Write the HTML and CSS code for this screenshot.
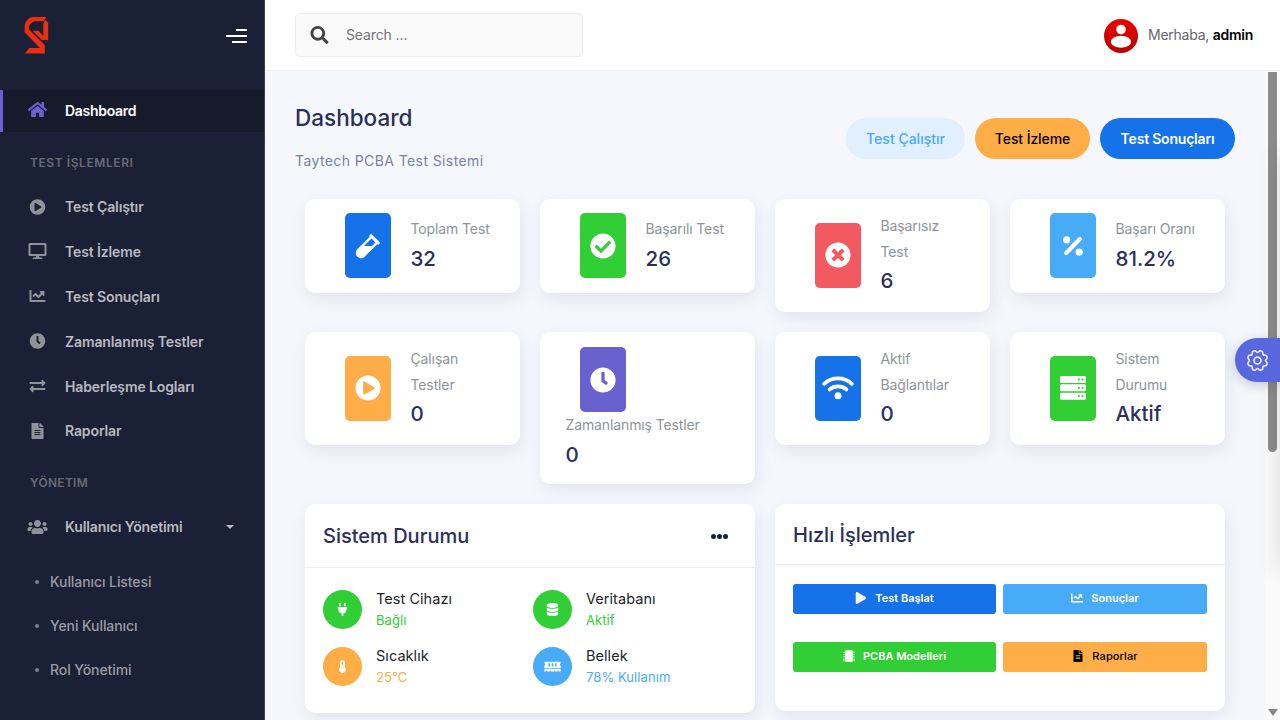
FILE: index.html
```html
<!DOCTYPE html>
<html lang="tr">
<head>
<meta charset="utf-8">
<title>Dashboard</title>
<link rel="stylesheet" href="styles.css">
</head>
<body>
<svg class="sprite" aria-hidden="true">
<symbol id="home" viewBox="0 0 576 512"><path d="M280.37 148.26L96 300.11V464a16 16 0 0 0 16 16l112.06-.29a16 16 0 0 0 15.92-16V368a16 16 0 0 1 16-16h64a16 16 0 0 1 16 16v95.64a16 16 0 0 0 16 16.05L464 480a16 16 0 0 0 16-16V300L295.67 148.26a12.19 12.19 0 0 0-15.3 0zM571.6 251.47L488 182.56V44.05a12 12 0 0 0-12-12h-56a12 12 0 0 0-12 12v72.61L318.47 43a48 48 0 0 0-61 0L4.34 251.47a12 12 0 0 0-1.6 16.9l25.5 31A12 12 0 0 0 45.15 301l235.22-193.74a12.19 12.19 0 0 1 15.3 0L530.9 301a12 12 0 0 0 16.9-1.6l25.5-31a12 12 0 0 0-1.7-16.93z"/></symbol>
<symbol id="play-circle" viewBox="0 0 512 512"><path d="M256 8C119 8 8 119 8 256s111 248 248 248 248-111 248-248S393 8 256 8zm115.7 272l-176 101c-15.8 8.8-35.7-2.5-35.7-21V152c0-18.4 19.8-29.8 35.7-21l176 107c16.4 9.2 16.4 32.9 0 42z"/></symbol>
<symbol id="desktop" viewBox="0 0 576 512"><path d="M528 0H48C21.5 0 0 21.5 0 48v320c0 26.5 21.5 48 48 48h192l-16 48h-72c-13.3 0-24 10.7-24 24s10.7 24 24 24h272c13.3 0 24-10.7 24-24s-10.7-24-24-24h-72l-16-48h192c26.5 0 48-21.5 48-48V48c0-26.5-21.5-48-48-48zm-16 352H64V64h448v288z"/></symbol>
<symbol id="chart" viewBox="0 0 512 512"><path d="M496 384H64V80c0-8.84-7.16-16-16-16H16C7.16 64 0 71.16 0 80v336c0 17.67 14.33 32 32 32h464c8.84 0 16-7.16 16-16v-32c0-8.84-7.16-16-16-16zM464 96H345.94c-21.38 0-32.09 25.85-16.97 40.97l32.4 32.4L288 242.75l-73.37-73.37c-12.5-12.5-32.76-12.5-45.25 0l-68.69 68.69c-6.25 6.25-6.25 16.38 0 22.63l22.62 22.62c6.25 6.25 16.38 6.25 22.63 0L192 237.25l73.37 73.37c12.5 12.5 32.76 12.5 45.25 0l96-96 32.4 32.4c15.12 15.12 40.97 4.41 40.97-16.97V112c.01-8.84-7.15-16-15.99-16z"/></symbol>
<symbol id="clock" viewBox="0 0 512 512"><path d="M256,8C119,8,8,119,8,256S119,504,256,504,504,393,504,256,393,8,256,8Zm92.49,313h0l-20,25a16,16,0,0,1-22.49,2.5h0l-67-49.72a40,40,0,0,1-15-31.23V112a16,16,0,0,1,16-16h32a16,16,0,0,1,16,16V256l58,42.5A16,16,0,0,1,348.49,321Z"/></symbol>
<symbol id="exchange" viewBox="0 0 512 512"><path d="M0 168v-16c0-13.255 10.745-24 24-24h360V80c0-21.367 25.899-32.042 40.971-16.971l80 80c9.372 9.373 9.372 24.569 0 33.941l-80 80C409.956 271.982 384 261.456 384 240v-48H24c-13.255 0-24-10.745-24-24zm488 152H128v-48c0-21.314-25.862-32.08-40.971-16.971l-80 80c-9.372 9.373-9.372 24.569 0 33.941l80 80C102.057 463.997 128 453.437 128 432v-48h360c13.255 0 24-10.745 24-24v-16c0-13.255-10.745-24-24-24z"/></symbol>
<symbol id="file" viewBox="0 0 384 512"><path d="M224 136V0H24C10.7 0 0 10.7 0 24v464c0 13.3 10.7 24 24 24h336c13.3 0 24-10.7 24-24V160H248c-13.2 0-24-10.8-24-24zm64 236c0 6.6-5.4 12-12 12H108c-6.6 0-12-5.4-12-12v-8c0-6.6 5.4-12 12-12h168c6.6 0 12 5.4 12 12v8zm0-64c0 6.6-5.4 12-12 12H108c-6.6 0-12-5.4-12-12v-8c0-6.6 5.4-12 12-12h168c6.6 0 12 5.4 12 12v8zm0-72v8c0 6.6-5.4 12-12 12H108c-6.6 0-12-5.4-12-12v-8c0-6.6 5.4-12 12-12h168c6.6 0 12 5.4 12 12zm96-114.1v6.1H256V0h6.1c6.4 0 12.5 2.5 17 7l97.9 98c4.5 4.5 7 10.6 7 16.9z"/></symbol>
<symbol id="users" viewBox="0 0 640 512"><path d="M96 224c35.3 0 64-28.7 64-64s-28.7-64-64-64-64 28.7-64 64 28.7 64 64 64zm448 0c35.3 0 64-28.7 64-64s-28.7-64-64-64-64 28.7-64 64 28.7 64 64 64zm32 32h-64c-17.6 0-33.5 7.1-45.1 18.6 40.3 22.1 68.9 62 75.1 109.4h66c17.7 0 32-14.3 32-32v-32c0-35.3-28.7-64-64-64zm-256 0c61.9 0 112-50.1 112-112S381.9 32 320 32 208 82.1 208 144s50.1 112 112 112zm76.8 32h-8.3c-20.8 10-43.9 16-68.5 16s-47.6-6-68.5-16h-8.3C179.6 288 128 339.6 128 403.2V432c0 26.5 21.5 48 48 48h288c26.5 0 48-21.5 48-48v-28.8c0-63.6-51.6-115.2-115.2-115.2zm-223.7-13.4C161.5 263.1 145.6 256 128 256H64c-35.3 0-64 28.7-64 64v32c0 17.7 14.3 32 32 32h65.9c6.3-47.4 34.9-87.3 75.2-109.4z"/></symbol>
<symbol id="search" viewBox="0 0 512 512"><path d="M505 442.7L405.3 343c-4.5-4.5-10.6-7-17-7H372c27.6-35.3 44-79.7 44-128C416 93.1 322.9 0 208 0S0 93.1 0 208s93.1 208 208 208c48.3 0 92.7-16.4 128-44v16.3c0 6.4 2.5 12.5 7 17l99.7 99.7c9.4 9.4 24.6 9.4 33.9 0l28.3-28.3c9.4-9.4 9.4-24.6.1-34zM208 336c-70.7 0-128-57.2-128-128 0-70.7 57.2-128 128-128 70.7 0 128 57.2 128 128 0 70.7-57.2 128-128 128z"/></symbol>
<symbol id="vial" viewBox="0 0 480 512"><path d="M477.7 186.1L309.5 18.3c-3.1-3.1-8.2-3.1-11.3 0l-34 33.9c-3.1 3.1-3.1 8.2 0 11.3l11.2 11.1L33 316.5c-38.8 38.7-45.1 102-9.4 143.5 20.6 24 49.5 36 78.4 35.9 26.4 0 52.8-10 72.9-30.1l246.3-245.7 11.2 11.1c3.1 3.1 8.2 3.1 11.3 0l34-33.9c3.1-3 3.1-8.1 0-11.2zM318 256H161l148-147.7 78.5 78.3L318 256z"/></symbol>
<symbol id="check" viewBox="0 0 512 512"><path d="M504 256c0 136.967-111.033 248-248 248S8 392.967 8 256 119.033 8 256 8s248 111.033 248 248zM227.314 387.314l184-184c6.248-6.248 6.248-16.379 0-22.627l-22.627-22.627c-6.248-6.249-16.379-6.249-22.628 0L216 308.118l-70.059-70.059c-6.248-6.248-16.379-6.248-22.628 0l-22.627 22.627c-6.248 6.248-6.248 16.379 0 22.627l104 104c6.249 6.249 16.379 6.249 22.628.001z"/></symbol>
<symbol id="times" viewBox="0 0 512 512"><path d="M256 8C119 8 8 119 8 256s111 248 248 248 248-111 248-248S393 8 256 8zm121.6 313.1c4.7 4.7 4.7 12.3 0 17L338 377.6c-4.7 4.7-12.3 4.7-17 0L256 312l-65.1 65.6c-4.7 4.7-12.3 4.7-17 0L134.4 338c-4.7-4.7-4.7-12.3 0-17l65.6-65-65.6-65.1c-4.7-4.7-4.7-12.3 0-17l39.6-39.6c4.7-4.7 12.3-4.7 17 0l65 65.7 65.1-65.6c4.7-4.7 12.3-4.7 17 0l39.6 39.6c4.7 4.7 4.7 12.3 0 17L312 256l65.6 65.1z"/></symbol>
<symbol id="percent" viewBox="0 0 20 20"><circle cx="3.7" cy="3.8" r="3.6"/><circle cx="16.2" cy="16.2" r="3.6"/><path d="M3.2 17L16.8 3" stroke="currentColor" stroke-width="4.2" stroke-linecap="round"/></symbol>
<symbol id="wifi" viewBox="0 0 32 24"><g fill="none" stroke="currentColor" stroke-width="3.8" stroke-linecap="round"><path d="M2.200 7.800Q8 2.400 16 2.400T29.800 7.800"/><path d="M7.600 13.400Q11 10.400 16 10.400T24.400 13.400"/></g><circle cx="16" cy="19.800" r="3.500"/></symbol>
<symbol id="server" viewBox="0 0 26 24"><path fill-rule="evenodd" d="M1.500 0h23A1.500 1.500 0 0 1 26 1.500v4A1.500 1.500 0 0 1 24.500 7h-23A1.500 1.500 0 0 1 0 5.500v-4A1.500 1.500 0 0 1 1.500 0zM18 2.600v1.800h1.800V2.600zm3.600 0v1.800h1.800V2.600zM1.500 8.300h23A1.500 1.500 0 0 1 26 9.800v4a1.500 1.500 0 0 1-1.500 1.500h-23A1.500 1.500 0 0 1 0 13.800v-4a1.500 1.500 0 0 1 1.500-1.500zM18 10.900v1.800h1.800v-1.800zm3.600 0v1.800h1.800v-1.800zM1.500 16.700h23a1.500 1.500 0 0 1 1.500 1.500v4a1.500 1.500 0 0 1-1.500 1.500h-23A1.500 1.500 0 0 1 0 22.200v-4a1.500 1.500 0 0 1 1.500-1.500zM18 19.300v1.800h1.800v-1.800zm3.600 0v1.800h1.800v-1.800z"/></symbol>
<symbol id="plug" viewBox="0 0 384 512"><path d="M320,32a32,32,0,0,0-64,0v96h64Zm48,128H16A16,16,0,0,0,0,176v32a16,16,0,0,0,16,16H32v32A160.07,160.07,0,0,0,160,412.8V512h64V412.8A160.07,160.07,0,0,0,352,256V224h16a16,16,0,0,0,16-16V176A16,16,0,0,0,368,160ZM128,32a32,32,0,0,0-64,0v96h64Z"/></symbol>
<symbol id="database" viewBox="0 0 448 512"><path d="M448 73.143v45.714C448 159.143 347.667 192 224 192S0 159.143 0 118.857V73.143C0 32.857 100.333 0 224 0s224 32.857 224 73.143zM448 176v102.857C448 319.143 347.667 352 224 352S0 319.143 0 278.857V176c48.125 33.143 136.208 48.572 224 48.572S399.874 209.143 448 176zm0 160v102.857C448 479.143 347.667 512 224 512S0 479.143 0 438.857V336c48.125 33.143 136.208 48.572 224 48.572S399.874 369.143 448 336z"/></symbol>
<symbol id="thermo" viewBox="0 0 256 512"><path fill-rule="evenodd" d="M224 96a96 96 0 0 0-192 0v203a128 128 0 1 0 192 0zM128 448a64 64 0 0 1-32-119V96a32 32 0 0 1 64 0v233a64 64 0 0 1-32 119z"/><circle cx="128" cy="384" r="68"/><path d="M100 200h56v160h-56z"/></symbol>
<symbol id="memory" viewBox="0 0 640 512"><path fill-rule="evenodd" d="M640 131V96a32 32 0 0 0-32-32H32A32 32 0 0 0 0 96v35a48 48 0 0 1 0 90v99h640v-99a48 48 0 0 1 0-90zM224 256h-64V128h64zm128 0h-64V128h64zm128 0h-64V128h64zM0 448h64v-26a16 16 0 0 1 32 0v26h128v-26a16 16 0 0 1 32 0v26h128v-26a16 16 0 0 1 32 0v26h128v-26a16 16 0 0 1 32 0v26h64v-96H0z"/></symbol>
<symbol id="play" viewBox="0 0 448 512"><path d="M424.4 214.7L72.4 6.6C43.800-10.300 0 6.100 0 47.900V464c0 37.500 40.700 60.100 72.400 41.300l352-208c31.400-18.500 31.500-64.100 0-82.600z"/></symbol>
<symbol id="chip" viewBox="0 0 512 512"><path d="M416 48v416a48 48 0 0 1-48 48H144a48 48 0 0 1-48-48V48a48 48 0 0 1 48-48h224a48 48 0 0 1 48 48zM0 92l72-24v48H0zm0 96l72-24v48H0zm0 96l72-24v48H0zm0 96l72-24v48H0zm0 64h72v32H0zM512 92l-72-24v48h72zm0 96l-72-24v48h72zm0 96l-72-24v48h72zm0 96l-72-24v48h72zm0 64h-72v32h72z"/></symbol>
</svg>

<div class="app">
  <aside class="sidebar">
    <div class="brand">
      <svg class="logo" viewBox="0 0 25 38"><path d="M9.500 0H22.500L20 4.300H11.500C8 4.300 4.600 8 4.600 11.500V12.500L21 28.700V37.500H0.500L5 31.800H16L0.300 15.600V10C0.300 5 4.500 0 9.500 0z"/><path d="M20.300 4.500L22 3L24.500 6V23.500H18L8.500 14H14.500L19.500 19.300V8z"/></svg>
      <div class="burger"><i></i><i></i><i></i></div>
    </div>
    <nav class="nav">
      <a class="item active"><svg class="ico home"><use href="#home"/></svg><span>Dashboard</span></a>
      <h4 class="section">TEST İŞLEMLERI</h4>
      <a class="item"><svg class="ico"><use href="#play-circle"/></svg><span>Test Çalıştır</span></a>
      <a class="item"><svg class="ico"><use href="#desktop"/></svg><span>Test İzleme</span></a>
      <a class="item"><svg class="ico"><use href="#chart"/></svg><span>Test Sonuçları</span></a>
      <a class="item"><svg class="ico"><use href="#clock"/></svg><span>Zamanlanmış Testler</span></a>
      <a class="item"><svg class="ico"><use href="#exchange"/></svg><span>Haberleşme Logları</span></a>
      <a class="item"><svg class="ico"><use href="#file"/></svg><span>Raporlar</span></a>
      <h4 class="section second">YÖNETIM</h4>
      <a class="item"><svg class="ico"><use href="#users"/></svg><span>Kullanıcı Yönetimi</span><i class="caret"></i></a>
      <div class="sub">
        <a>Kullanıcı Listesi</a>
        <a>Yeni Kullanıcı</a>
        <a>Rol Yönetimi</a>
      </div>
    </nav>
  </aside>

  <div class="main">
    <header class="topbar">
      <div class="search"><svg><use href="#search"/></svg><span>Search ...</span></div>
      <div class="user">
        <svg class="avatar" viewBox="0 0 34 34"><defs><linearGradient id="red" x2="0" y2="1"><stop stop-color="#f00000"/><stop offset="1" stop-color="#b40000"/></linearGradient></defs><circle cx="17" cy="17" r="17" fill="url(#red)"/><circle cx="17" cy="10.500" r="4.800" fill="#fff"/><ellipse cx="17" cy="22.800" rx="10.200" ry="6" fill="#fff"/></svg>
        <span>Merhaba, <b>admin</b></span>
      </div>
    </header>

    <div class="body">
      <main class="content">
        <div class="head">
          <div>
            <h1>Dashboard</h1>
            <p>Taytech PCBA Test Sistemi</p>
          </div>
          <div class="actions">
            <a class="pill soft">Test Çalıştır</a>
            <a class="pill warn">Test İzleme</a>
            <a class="pill blue">Test Sonuçları</a>
          </div>
        </div>

        <div class="stats">
          <div class="card stat"><div class="box blue"><svg><use href="#vial"/></svg></div><div class="txt"><p>Toplam Test</p><h3>32</h3></div></div>
          <div class="card stat"><div class="box green"><svg><use href="#check"/></svg></div><div class="txt"><p>Başarılı Test</p><h3>26</h3></div></div>
          <div class="card stat"><div class="box red"><svg><use href="#times"/></svg></div><div class="txt"><p>Başarısız<br>Test</p><h3>6</h3></div></div>
          <div class="card stat"><div class="box sky"><svg class="pct"><use href="#percent"/></svg></div><div class="txt"><p>Başarı Oranı</p><h3>81.2%</h3></div></div>
          <div class="card stat"><div class="box warn"><svg><use href="#play-circle"/></svg></div><div class="txt"><p>Çalışan<br>Testler</p><h3>0</h3></div></div>
          <div class="card stat wrap"><div class="box purple"><svg><use href="#clock"/></svg></div><div class="txt"><p>Zamanlanmış Testler</p><h3>0</h3></div></div>
          <div class="card stat"><div class="box blue"><svg class="wide"><use href="#wifi"/></svg></div><div class="txt"><p>Aktif<br>Bağlantılar</p><h3>0</h3></div></div>
          <div class="card stat"><div class="box green"><svg><use href="#server"/></svg></div><div class="txt"><p>Sistem<br>Durumu</p><h3>Aktif</h3></div></div>
        </div>

        <div class="panels">
          <section class="card panel">
            <div class="panel-head tall"><h2>Sistem Durumu</h2><span class="dots"><i></i><i></i><i></i></span></div>
            <div class="status">
              <div class="entry"><span class="disc green"><svg><use href="#plug"/></svg></span><div><p>Test Cihazı</p><small class="t-green">Bağlı</small></div></div>
              <div class="entry"><span class="disc green"><svg><use href="#database"/></svg></span><div><p>Veritabanı</p><small class="t-green">Aktif</small></div></div>
              <div class="entry"><span class="disc warn"><svg><use href="#thermo"/></svg></span><div><p>Sıcaklık</p><small class="t-warn">25°C</small></div></div>
              <div class="entry"><span class="disc sky"><svg class="mem"><use href="#memory"/></svg></span><div><p>Bellek</p><small class="t-sky">78% Kullanım</small></div></div>
            </div>
          </section>
          <section class="card panel">
            <div class="panel-head"><h2>Hızlı İşlemler</h2></div>
            <div class="quick">
              <a class="btn blue"><svg><use href="#play"/></svg>Test Başlat</a>
              <a class="btn sky"><svg><use href="#chart"/></svg>Sonuçlar</a>
              <a class="btn green"><svg><use href="#chip"/></svg>PCBA Modelleri</a>
              <a class="btn warn dark"><svg><use href="#file"/></svg>Raporlar</a>
            </div>
          </section>
        </div>
      </main>
      <div class="scrollbar"><i class="thumb"></i><i class="down"></i></div>
    </div>
  </div>
</div>
<div class="edge-shadow"></div>
<div class="settings"><svg viewBox="-1 -1 18 18"><g transform="rotate(22.5 8 8)"><path d="M9.796 1.343c-.527-1.790-3.065-1.790-3.592 0l-.094.319a.873.873 0 0 1-1.255.52l-.292-.16c-1.640-.892-3.433.902-2.540 2.541l.159.292a.873.873 0 0 1-.52 1.255l-.319.094c-1.790.527-1.790 3.065 0 3.592l.319.094a.873.873 0 0 1 .52 1.255l-.16.292c-.892 1.640.901 3.434 2.541 2.540l.292-.159a.873.873 0 0 1 1.255.52l.094.319c.527 1.790 3.065 1.790 3.592 0l.094-.319a.873.873 0 0 1 1.255-.52l.292.16c1.640.893 3.434-.902 2.540-2.541l-.159-.292a.873.873 0 0 1 .52-1.255l.319-.094c1.790-.527 1.790-3.065 0-3.592l-.319-.094a.873.873 0 0 1-.52-1.255l.16-.292c.893-1.640-.902-3.433-2.541-2.540l-.292.159a.873.873 0 0 1-1.255-.52z"/></g><circle cx="8" cy="8" r="2.700"/></svg></div>
</body>
</html>
```
FILE: styles.css
```css
* { box-sizing: border-box; margin: 0; padding: 0; }
body { font-family: Inter, "Liberation Sans", sans-serif; font-size: 14px; color: #212529; background: #f5f7fd; overflow: hidden; }
svg { fill: currentColor; flex: none; }
.sprite { position: absolute; width: 0; height: 0; }
.app { display: flex; height: 720px; }

.sidebar { width: 265px; flex: none; background: #1a2035; border-right: 1px solid #3b4056; }
.brand { height: 70px; padding: 0 17px 0 24px; display: flex; justify-content: space-between; align-items: center; }
.logo { width: 25px; height: 37px; color: #ea2f12; }
.burger { display: flex; flex-direction: column; align-items: flex-end; gap: 4px; padding-top: 1px; }
.burger i { height: 2px; background: #fff; width: 21px; }
.burger i:first-child { width: 11px; }
.burger i:last-child { width: 15px; }
.nav { padding-top: 20px; }
.item { display: flex; align-items: center; height: 42px; margin-bottom: 2.900px; padding: 0 0 1px 25px; color: #b9babf; font-weight: 600; letter-spacing: -.12px; }
.item span { padding-left: 15px; }
.ico { width: 25px; height: 16px; color: #8d9498; }
.item.active { background: #161b2b; color: #fff; border-left: 3px solid #6861ce; padding-left: 22px; margin-bottom: 0; letter-spacing: -.3px; }
.item.active .ico { color: #6861ce; height: 17px; margin-top: -2px; }
.section { height: 54px; padding: 22px 0 0 30px; font-size: 12px; line-height: 18px; font-weight: 600; letter-spacing: .58px; color: #686b75; }
.section.second { height: 51px; padding-top: 19px; letter-spacing: .3px; }
.caret { margin-left: auto; margin-right: 30px; border: 4px solid transparent; border-top-color: #b9babf; border-bottom: 0; }
.sub { padding-top: 8.500px; }
.sub a { display: flex; align-items: center; height: 44px; padding-left: 35px; color: #9a9ca3; font-weight: 500; letter-spacing: -.08px; }
.sub a::before { content: ""; width: 4px; height: 4px; border-radius: 50%; background: #7b7f89; margin-right: 11px; }

.main { flex: 1; display: flex; flex-direction: column; min-width: 0; }
.topbar { height: 71px; flex: none; background: #fff; border-bottom: 1px solid #f1f1f4; display: flex; align-items: center; justify-content: space-between; padding: 0 27px 0 30px; }
.search { width: 288px; height: 44px; border: 1px solid #ebecec; border-radius: 5px; background: #f9f9f9; display: flex; align-items: center; padding-left: 14px; color: #757575; letter-spacing: -.12px; }
.search svg { width: 19px; height: 18px; color: #444; margin-right: 17px; }
.search span, .user span { padding-bottom: 1px; }
.user { display: flex; align-items: center; gap: 10px; color: #666; letter-spacing: -.26px; }
.user b { color: #000; font-weight: 600; }
.avatar { width: 34px; height: 34px; margin-top: 2px; }
.body { flex: 1; display: flex; min-height: 0; }
.content { flex: 1; background: #f5f7fd; padding: 32px 30px 0; overflow: hidden; }
.head { display: flex; justify-content: space-between; height: 96px; }
h1 { font-size: 22.500px; font-weight: 500; line-height: 30px; color: #2a2f5b; letter-spacing: 0; }
.head p { margin-top: 18px; line-height: 20px; font-size: 14px; color: #7c7fa2; letter-spacing: .4px; }
.actions { display: flex; gap: 10px; padding-top: 15px; }
.pill { height: 41px; border-radius: 21px; display: flex; align-items: center; justify-content: center; font-weight: 500; }
.pill.soft { width: 119px; background: #e2effe; color: #48abf7; }
.pill.warn { width: 115px; color: #000; letter-spacing: -.1px; }
.pill.blue { width: 135px; font-weight: 600; letter-spacing: -.2px; }
.blue { background: #1572e8; color: #fff; }
.green { background: #31ce36; color: #fff; }
.red { background: #f25961; color: #fff; }
.sky { background: #48abf7; color: #fff; }
.warn { background: #ffad46; color: #fff; }
.purple { background: #6861ce; color: #fff; }

.card { background: #fff; border-radius: 10px; box-shadow: 2px 6px 15px rgba(69, 65, 78, .1); }
.stats { display: grid; grid-template-columns: repeat(4, 215px); gap: 20px; padding-left: 10px; align-items: start; }
.stat { display: flex; align-items: center; padding: 14px 0 15px 40px; min-height: 94px; }
.box { width: 45.500px; height: 65px; border-radius: 5px; display: flex; align-items: center; justify-content: center; flex: none; }
.box svg { width: 26px; height: 26px; }
.box svg.pct { width: 20px; height: 20px; }
.box svg.wide { width: 32px; height: 24px; }
.txt { padding-left: 20px; }
.txt p { line-height: 25.500px; color: #8d9498; letter-spacing: -.12px; }
.txt h3 { font-size: 20.500px; line-height: 33px; font-weight: 500; color: #2a2f5b; letter-spacing: 0; }
.wrap { display: block; height: 152px; padding-top: 15px; }
.wrap .txt { padding: 0; margin-left: -14.500px; }

.panels { display: grid; grid-template-columns: 450px 450px; gap: 20px; padding: 20px 0 0 10px; align-items: start; }
.panel { height: 207px; }
.panel:first-child { height: 209px; }
.panel-head { height: 61px; border-bottom: 1px solid #ebecec; display: flex; align-items: center; justify-content: space-between; padding: 1px 27px 0 18px; }
.panel-head.tall { height: 64px; }
h2 { font-size: 20px; font-weight: 500; color: #2a2f5b; letter-spacing: 0; }
.dots { display: flex; gap: 1px; }
.dots i { width: 5px; height: 5px; border-radius: 50%; background: #1a2035; }
.status { display: grid; grid-template-columns: 210px 210px; row-gap: 17px; padding: 21px 18px; }
.entry { display: flex; align-items: center; gap: 14px; height: 40px; }
.entry p { font-size: 14.500px; line-height: 21px; letter-spacing: .05px; }
.entry small { display: block; font-size: 13px; line-height: 22px; letter-spacing: .08px; }
.disc { width: 39px; height: 39px; border-radius: 50%; display: flex; align-items: center; justify-content: center; }
.disc svg { width: 13px; height: 13px; }
.disc svg.mem { width: 17px; }
.t-green { color: #31ce36; }
.t-warn { color: #ffad46; }
.t-sky { color: #48abf7; }
.quick { display: grid; grid-template-columns: 203px 204px; gap: 28px 7px; padding: 19px 18px; }
.btn { height: 30px; border-radius: 3px; display: flex; align-items: center; justify-content: center; gap: 8px; font-size: 11px; font-weight: 600; padding-bottom: 2px; }
.btn svg { width: 12px; height: 12px; }
.btn.dark { color: #000; font-weight: 500; letter-spacing: .1px; }

.scrollbar { width: 15px; background: #fafafa; display: flex; flex-direction: column; align-items: center; justify-content: space-between; padding: 1px 0 4px; }
.thumb { width: 9px; height: 380px; background: #8b8b8b; border-radius: 0 0 5px 5px; }
.down { border: 5px solid transparent; border-top: 7px solid #858585; border-bottom: 0; }
.edge-shadow { position: absolute; right: -10px; top: 155px; width: 10px; height: 415px; box-shadow: 0 0 20px rgba(69, 65, 78, .22); }
.settings { position: absolute; right: 0; top: 338px; width: 45px; height: 44px; border-radius: 22px 0 0 22px; background: #5867dd; box-shadow: 0 3px 12px rgba(50, 50, 90, .25); display: flex; align-items: center; padding-left: 11px; }
.settings svg { width: 23px; height: 23px; fill: none; stroke: #fff; stroke-width: 1.300; opacity: .85; }
```
